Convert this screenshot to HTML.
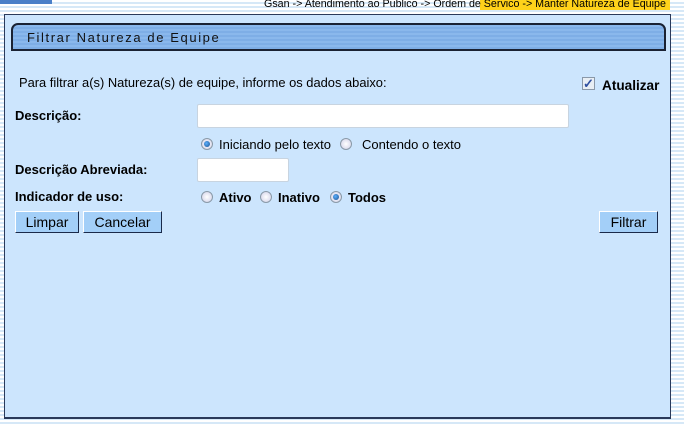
<!DOCTYPE html>
<html><head><meta charset="utf-8"><style>
*{margin:0;padding:0;box-sizing:border-box}
body{width:684px;height:424px;overflow:hidden;position:relative;font-family:"Liberation Sans",Arial,sans-serif;font-size:12px;color:#000;
background:repeating-linear-gradient(to bottom,#fff 0,#fff 2px,#d6e8f7 2px,#d6e8f7 4px);}
.a{position:absolute;white-space:nowrap}
#panel{position:absolute;left:4px;top:14px;width:667px;height:405px;background:#cce5fd;border:1px solid #2a3a5a;border-bottom-width:2px}
#tab{position:absolute;left:11px;top:23px;width:655px;height:28px;border:2px solid #1a2233;border-radius:7px 7px 0 0;
background:repeating-linear-gradient(to bottom,#8ab8ec 0,#8ab8ec 2px,#7eaee6 2px,#7eaee6 4px)}
input.t{position:absolute;height:24px;background:#fff;border:1px solid #c8d4e0;border-radius:2px}
.r{position:absolute;width:12px;height:12px;border-radius:50%;border:1px solid #8a9aa8;background:radial-gradient(circle,#fff 0,#dde 70%)}
.r.on::after{content:"";position:absolute;left:2px;top:2px;width:6px;height:6px;border-radius:50%;background:radial-gradient(circle at 40% 40%,#5bb0ff,#1a4f8c)}
.btn{position:absolute;height:22px;background:#a3cff8;border:1px solid #fff;border-right-color:#1a2a4a;border-bottom-color:#1a2a4a;font-size:14px;text-align:center;line-height:20px}
b{font-weight:bold}
</style></head><body>
<div class="a" style="left:0;top:0;width:52px;height:4px;background:#4a7fc8"></div>
<div class="a" style="left:480px;top:0;width:190px;height:10px;background:#ffd21a"></div>
<div class="a" style="left:264px;top:-3px;font-size:10.7px;line-height:14px">Gsan -&gt; Atendimento ao Publico -&gt; Ordem de Servico -&gt; Manter Natureza de Equipe</div>
<div id="panel"></div>
<div id="tab"></div>
<div class="a" style="left:27px;top:30px;font-size:13px;letter-spacing:1.6px;color:#111">Filtrar Natureza de Equipe</div>
<div class="a" style="left:19px;top:75px;font-size:12.9px">Para filtrar a(s) Natureza(s) de equipe, informe os dados abaixo:</div>
<div class="a" style="left:582px;top:77px;width:13px;height:13px;border:1px solid #8a98a8;background:#e8eef4;color:#3050a0;font-size:13px;font-weight:bold;line-height:11px;text-align:center">✓</div>
<div class="a" style="left:602px;top:78px;font-size:13.6px"><b>Atualizar</b></div>
<div class="a" style="left:15px;top:108px;font-size:13px"><b>Descrição:</b></div>
<input class="t" style="left:197px;top:104px;width:372px">
<div class="r on" style="left:201px;top:138px"></div>
<div class="a" style="left:219px;top:137px;font-size:13px">Iniciando pelo texto</div>
<div class="r" style="left:340px;top:138px"></div>
<div class="a" style="left:362px;top:137px;font-size:13px">Contendo o texto</div>
<div class="a" style="left:15px;top:162px;font-size:13px"><b>Descrição Abreviada:</b></div>
<input class="t" style="left:197px;top:158px;width:92px">
<div class="a" style="left:15px;top:189px;font-size:13px"><b>Indicador de uso:</b></div>
<div class="r" style="left:201px;top:191px"></div>
<div class="a" style="left:219px;top:190px;font-size:13px"><b>Ativo</b></div>
<div class="r" style="left:260px;top:191px"></div>
<div class="a" style="left:278px;top:190px;font-size:13px"><b>Inativo</b></div>
<div class="r on" style="left:330px;top:191px"></div>
<div class="a" style="left:348px;top:190px;font-size:13px"><b>Todos</b></div>
<div class="btn" style="left:15px;top:211px;width:64px">Limpar</div>
<div class="btn" style="left:83px;top:211px;width:79px">Cancelar</div>
<div class="btn" style="left:599px;top:211px;width:59px">Filtrar</div>
</body></html>
